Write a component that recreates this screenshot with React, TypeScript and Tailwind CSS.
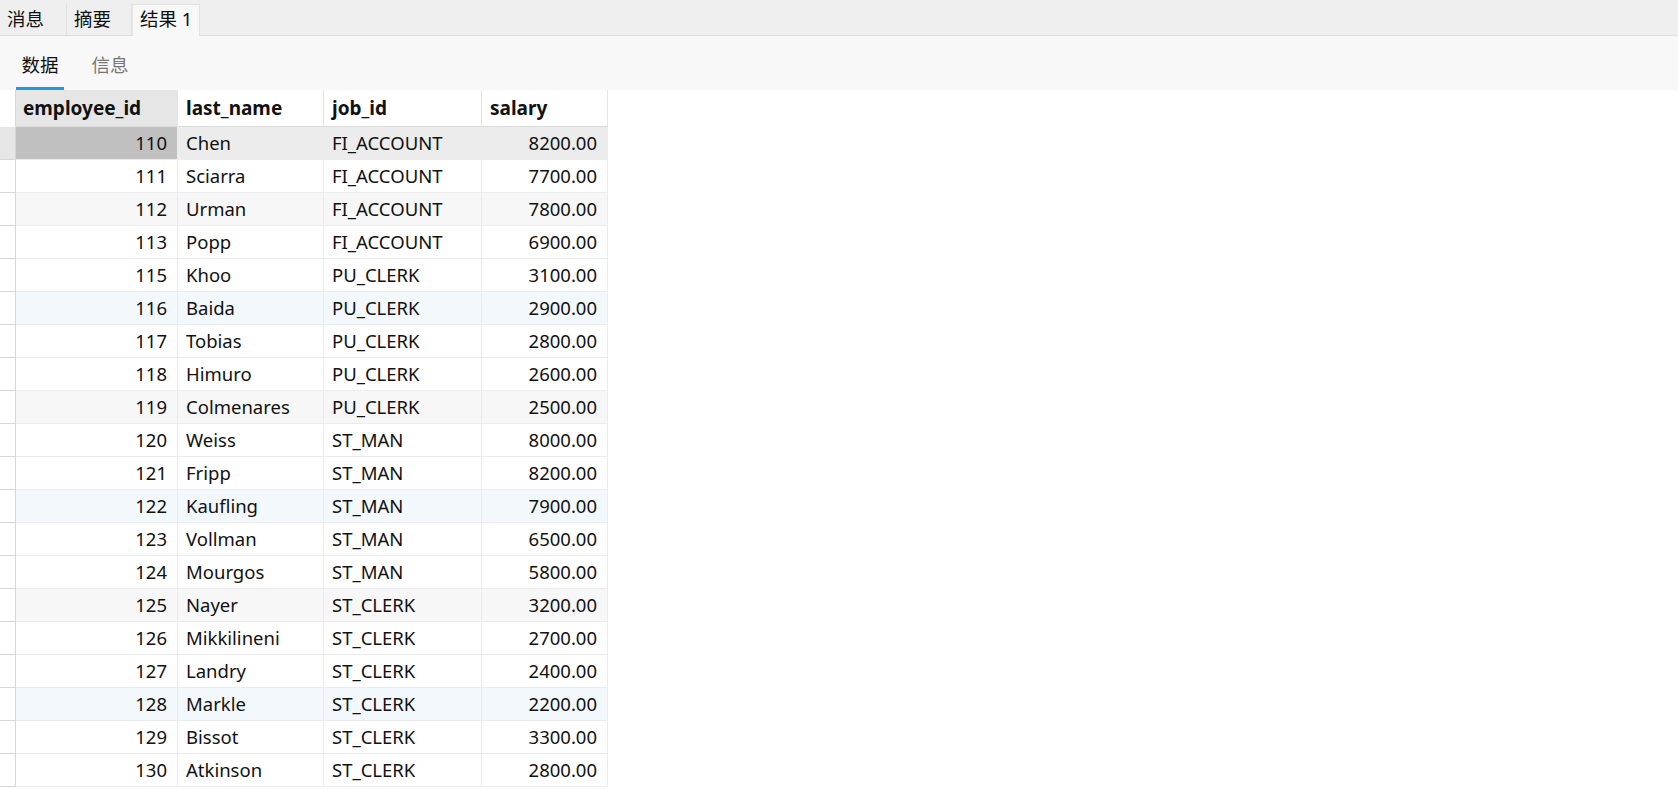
import { useState } from "react";

type Row = {
  employee_id: number;
  last_name: string;
  job_id: string;
  salary: string;
};

const rows: Row[] = [
  { employee_id: 110, last_name: "Chen", job_id: "FI_ACCOUNT", salary: "8200.00" },
  { employee_id: 111, last_name: "Sciarra", job_id: "FI_ACCOUNT", salary: "7700.00" },
  { employee_id: 112, last_name: "Urman", job_id: "FI_ACCOUNT", salary: "7800.00" },
  { employee_id: 113, last_name: "Popp", job_id: "FI_ACCOUNT", salary: "6900.00" },
  { employee_id: 115, last_name: "Khoo", job_id: "PU_CLERK", salary: "3100.00" },
  { employee_id: 116, last_name: "Baida", job_id: "PU_CLERK", salary: "2900.00" },
  { employee_id: 117, last_name: "Tobias", job_id: "PU_CLERK", salary: "2800.00" },
  { employee_id: 118, last_name: "Himuro", job_id: "PU_CLERK", salary: "2600.00" },
  { employee_id: 119, last_name: "Colmenares", job_id: "PU_CLERK", salary: "2500.00" },
  { employee_id: 120, last_name: "Weiss", job_id: "ST_MAN", salary: "8000.00" },
  { employee_id: 121, last_name: "Fripp", job_id: "ST_MAN", salary: "8200.00" },
  { employee_id: 122, last_name: "Kaufling", job_id: "ST_MAN", salary: "7900.00" },
  { employee_id: 123, last_name: "Vollman", job_id: "ST_MAN", salary: "6500.00" },
  { employee_id: 124, last_name: "Mourgos", job_id: "ST_MAN", salary: "5800.00" },
  { employee_id: 125, last_name: "Nayer", job_id: "ST_CLERK", salary: "3200.00" },
  { employee_id: 126, last_name: "Mikkilineni", job_id: "ST_CLERK", salary: "2700.00" },
  { employee_id: 127, last_name: "Landry", job_id: "ST_CLERK", salary: "2400.00" },
  { employee_id: 128, last_name: "Markle", job_id: "ST_CLERK", salary: "2200.00" },
  { employee_id: 129, last_name: "Bissot", job_id: "ST_CLERK", salary: "3300.00" },
  { employee_id: 130, last_name: "Atkinson", job_id: "ST_CLERK", salary: "2800.00" },
];

// row tint, copied from the screenshot (grey / pale blue every third row)
function rowBg(i: number) {
  if (i === 0) return "bg-[#ececec]";
  if (i % 3 === 2) return Math.floor(i / 3) % 2 === 0 ? "bg-[#f7f7f7]" : "bg-[#f3f8fd]";
  return "bg-white";
}

export default function App() {
  const [tab, setTab] = useState("result");
  const [sub, setSub] = useState("data");

  return (
    <div className="w-[1678px] h-[789px] overflow-hidden bg-white text-[#111] font-['Noto_Sans','Noto_Sans_CJK_SC',sans-serif]">
      {/* top tabs */}
      <div className="h-[36px] bg-[#efefef] border-b border-[#dcdcdc] flex items-end">
        <button
          onClick={() => setTab("msg")}
          className="w-[67px] h-[32px] border-r border-[#e2e2e2] text-left pl-[7px] text-[18.5px] leading-none"
        >
          消息
        </button>
        <button
          onClick={() => setTab("sum")}
          className="w-[65px] h-[32px] border-r border-[#e2e2e2] text-left pl-[7px] text-[18.5px] leading-none"
        >
          摘要
        </button>
        <button
          onClick={() => setTab("result")}
          className={
            "w-[68px] h-[32px] -mb-px text-left pl-[7px] pb-[2px] text-[18.5px] leading-none border-x border-t border-[#e2e2e2] " +
            (tab === "result" ? "bg-[#f8f8f8]" : "")
          }
        >
          结果 1
        </button>
      </div>

      {/* sub tabs */}
      <div className="h-[54px] bg-[#f8f8f8] flex items-end pl-[16px] gap-[22px]">
        <button
          onClick={() => setSub("data")}
          className={
            "w-[48px] h-[38px] text-[18.5px] leading-none pb-[8px] border-b-[3px] " +
            (sub === "data" ? "border-[#1a9be0] text-[#111]" : "border-transparent text-[#777]")
          }
        >
          数据
        </button>
        <button
          onClick={() => setSub("info")}
          className={
            "w-[48px] h-[38px] text-[18.5px] leading-none pb-[8px] border-b-[3px] " +
            (sub === "info" ? "border-[#1a9be0] text-[#111]" : "border-transparent text-[#777]")
          }
        >
          信息
        </button>
      </div>

      {/* grid */}
      <div className="flex flex-col text-[18.5px]">
        <div className="flex h-[37px]">
          <div className="w-[16px] border-r border-[#d6d6d6] bg-white" />
          <div className="flex border-b border-[#dcdcdc] text-[19px] font-bold">
            <div className="w-[162px] bg-[#e6e6e6] border-r border-[#e6e6e6] pl-[7px] flex items-center">employee_id</div>
            <div className="w-[146px] border-r border-[#e4e4e4] pl-[8px] flex items-center">last_name</div>
            <div className="w-[158px] border-r border-[#e4e4e4] pl-[8px] flex items-center">job_id</div>
            <div className="w-[126px] border-r border-[#e4e4e4] pl-[8px] flex items-center">salary</div>
          </div>
        </div>
        {rows.map((r, i) => (
          <div key={r.employee_id} className="flex h-[33px]">
            <div className={"w-[16px] border-r border-b border-[#d6d6d6] " + (i === 0 ? "bg-[#e6e6e6]" : "bg-white")} />
            <div className={"flex border-b border-[#ececec] " + rowBg(i)}>
              <div className={"w-[162px] border-r border-[#ececec] flex items-center justify-end pr-[10px] " + (i === 0 ? "bg-[#c0c0c0]" : "")}>
                {r.employee_id}
              </div>
              <div className="w-[146px] border-r border-[#ececec] flex items-center pl-[8px]">{r.last_name}</div>
              <div className="w-[158px] border-r border-[#ececec] flex items-center pl-[8px]">{r.job_id}</div>
              <div className="w-[126px] border-r border-[#ececec] flex items-center justify-end pr-[10px]">{r.salary}</div>
            </div>
          </div>
        ))}
      </div>
    </div>
  );
}
